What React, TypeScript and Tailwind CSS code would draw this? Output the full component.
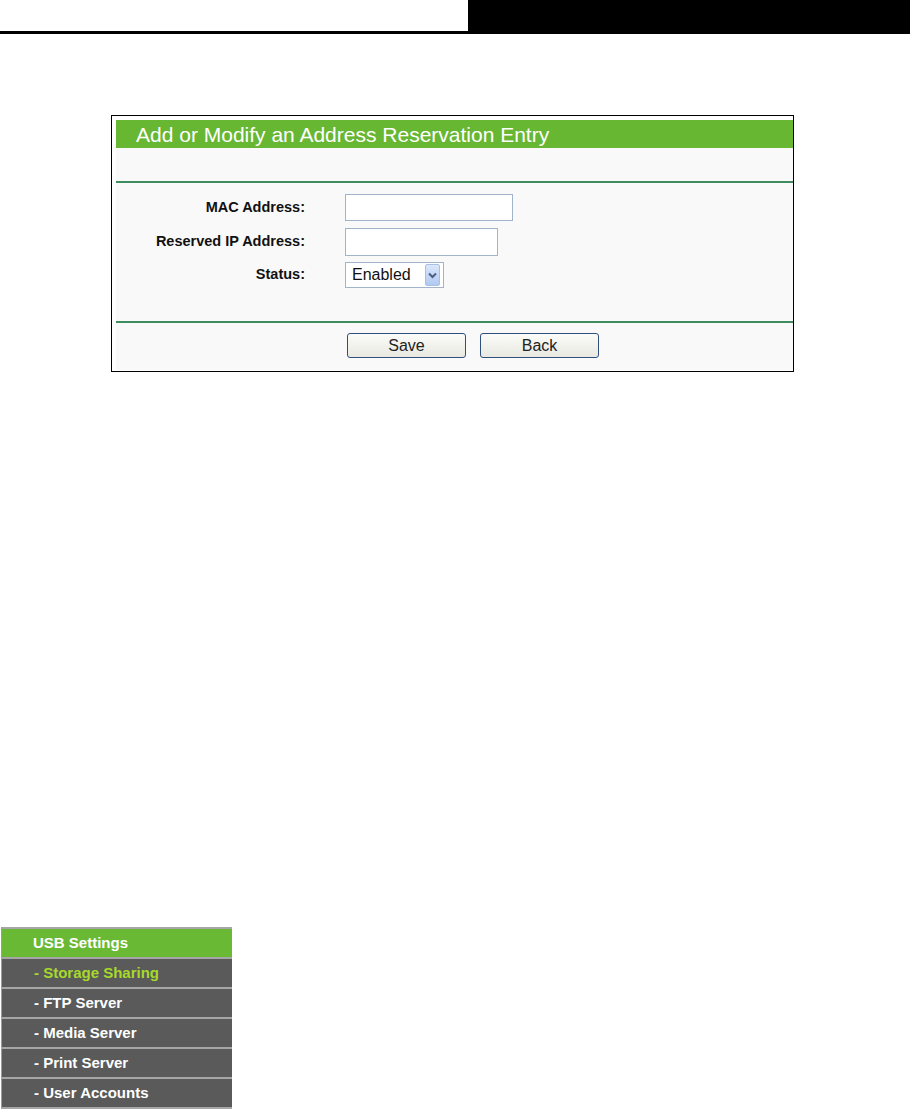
import React from "react";

const font = { fontFamily: '"Liberation Sans", Arial, sans-serif' };

function Input({ w, h }: { w: number; h: number }) {
  return (
    <div
      className="bg-white border border-[#a2b4cc]"
      style={{ width: w, height: h }}
    />
  );
}

function Select() {
  return (
    <div className="w-[99px] h-[26px] bg-white border border-[#a2b4cc] flex items-center justify-between pl-[6px] pr-[3px]">
      <span className="text-[16px] leading-none text-[#111]">Enabled</span>
      <div className="w-[15px] h-[22px] rounded-[2px] border border-[#a9c0e4] bg-gradient-to-b from-[#dbe7fb] to-[#b1c9f1] flex items-center justify-center">
        <svg width="9" height="7" viewBox="0 0 9 7">
          <path d="M1 1.5 L4.5 5 L8 1.5" fill="none" stroke="#4a5f85" strokeWidth="2" />
        </svg>
      </div>
    </div>
  );
}

function Btn({ label }: { label: string }) {
  return (
    <div className="w-[119px] h-[25px] rounded-[3px] border border-[#2f4f7e] bg-gradient-to-b from-[#fbfbf8] to-[#e9e9e2] flex items-center justify-center text-[16px] text-[#222]">
      {label}
    </div>
  );
}

const menuItems = [
  "- Storage Sharing",
  "- FTP Server",
  "- Media Server",
  "- Print Server",
  "- User Accounts",
];

export default function App() {
  return (
    <div className="w-[910px] h-[1112px] bg-white overflow-hidden" style={font}>
      {/* top bar */}
      <div className="flex h-[34px]">
        <div className="w-[468px] border-b-[3px] border-black" />
        <div className="flex-1 bg-black" />
      </div>

      {/* form box */}
      <div className="ml-[111px] mt-[81px] w-[683px] h-[257px] border border-black bg-white pl-[4px] pt-[4px]">
        <div className="h-[28px] bg-[#67b733] flex items-center pl-[20px]">
          <span className="text-white text-[21px] leading-none">
            Add or Modify an Address Reservation Entry
          </span>
        </div>
        <div className="bg-[#f9f9f9] h-[222px] flex flex-col">
          <div className="h-[33px]" />
          <div className="h-[2px] bg-[#3f8c60]" />
          <div className="flex flex-col pt-[11px] h-[138px]">
            <div className="flex items-center h-[27px]">
              <div className="w-[189px] text-right font-bold text-[14.5px] text-[#111]">MAC Address:</div>
              <div className="pl-[40px]">
                <Input w={168} h={27} />
              </div>
            </div>
            <div className="flex items-center h-[28px] mt-[7px]">
              <div className="w-[189px] text-right font-bold text-[14.5px] text-[#111]">Reserved IP Address:</div>
              <div className="pl-[40px]">
                <Input w={153} h={28} />
              </div>
            </div>
            <div className="flex items-center h-[26px] mt-[6px]">
              <div className="w-[189px] text-right font-bold text-[14.5px] text-[#111]">Status:</div>
              <div className="pl-[40px]">
                <Select />
              </div>
            </div>
          </div>
          <div className="h-[2px] bg-[#3f8c60]" />
          <div className="flex pl-[231px] pt-[10px] gap-[14px]">
            <Btn label="Save" />
            <Btn label="Back" />
          </div>
        </div>
      </div>

      {/* menu */}
      <div className="mt-[555px] ml-[1px] w-[231px] border-l border-[#9c9c9c] border-b-2 border-b-[#a6a6a6]">
        <div className="h-[30px] border-t-2 border-[#a6a6a6] bg-[#69b934] flex items-center pl-[31px] text-white font-bold text-[15px]">
          USB Settings
        </div>
        {menuItems.map((m, i) => (
          <div
            key={m}
            className={
              "h-[30px] border-t-2 border-[#a6a6a6] bg-[#5a5a5a] flex items-center pl-[32px] font-bold text-[15px] " +
              (i === 0 ? "text-[#a6d92a]" : "text-white")
            }
          >
            {m}
          </div>
        ))}
      </div>
    </div>
  );
}
